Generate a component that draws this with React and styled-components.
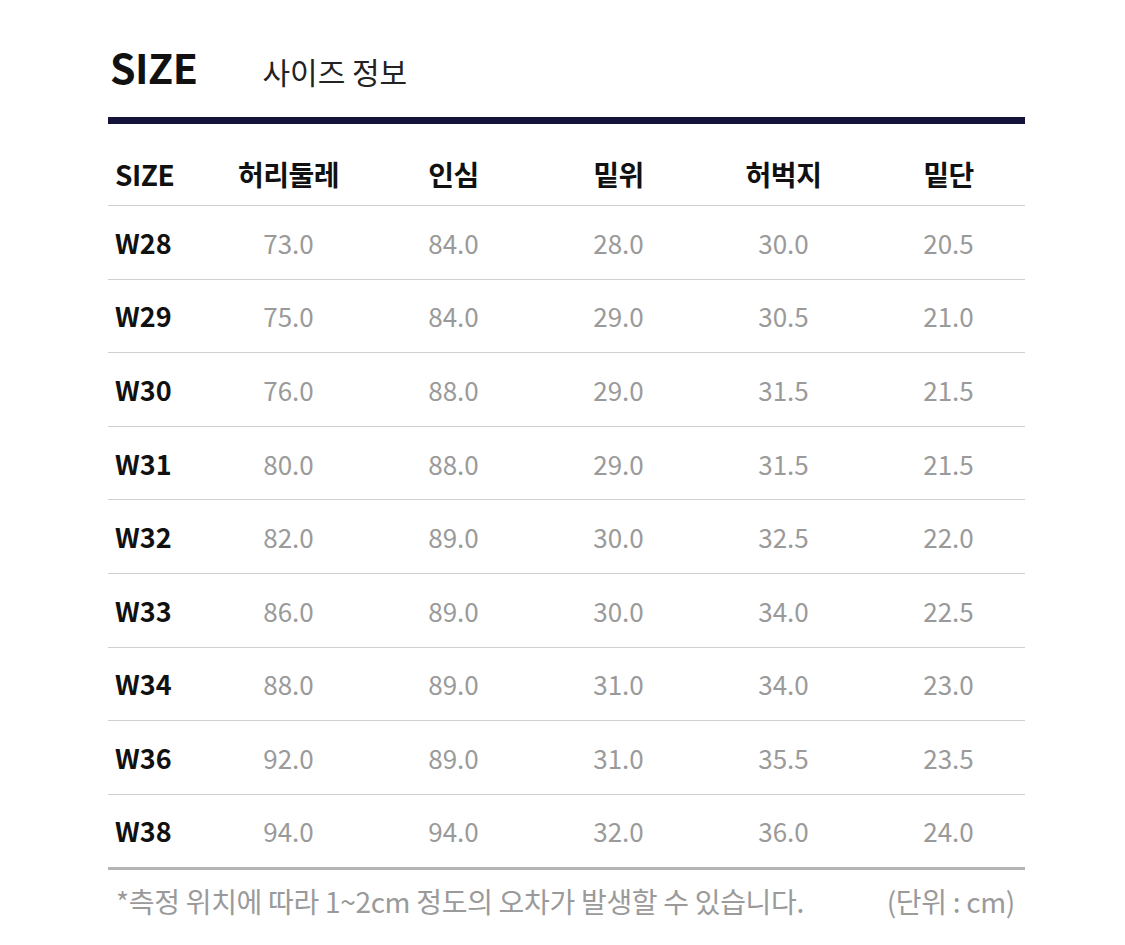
import React from "react";
import styled, { createGlobalStyle } from "styled-components";

const Global = createGlobalStyle`
  html, body { margin: 0; padding: 0; background: #fff; }
  body { font-family: "Noto Sans CJK KR", "Noto Sans", sans-serif; color: #111; }
`;

const Page = styled.div`
  width: 1125px;
  height: 945px;
  box-sizing: border-box;
  padding: 36px 0 0 108px;
`;

const Wrap = styled.div`
  width: 917px;
`;

const TitleBar = styled.div`
  display: flex;
  align-items: baseline;
  padding-left: 2px;
  height: 60px;
`;

const Title = styled.h1`
  margin: 0;
  font-size: 41px;
  font-weight: 700;
  letter-spacing: -0.5px;
  color: #111;
`;

const Sub = styled.span`
  margin-left: 65px;
  font-size: 30px;
  font-weight: 400;
  color: #222;
`;

const NavyRule = styled.div`
  height: 7px;
  background: #14143a;
  margin-top: 21px;
`;

const Row = styled.div`
  display: grid;
  grid-template-columns: 98px repeat(5, 165px);
  align-items: center;
  height: ${(p) => p.$h}px;
  padding-top: ${(p) => (p.$head ? "18px" : "0")};
  border-bottom: ${(p) => (p.$last ? "3px solid #b5b5b5" : "1px solid #cfcfcf")};
  box-sizing: border-box;
`;

const Cell = styled.div`
  font-size: ${(p) => (p.$head ? "28px" : p.$first ? "27px" : "26px")};
  text-align: ${(p) => (p.$first ? "left" : "center")};
  padding-left: ${(p) => (p.$first ? "7px" : "0")};
  font-weight: ${(p) => (p.$head || p.$first ? 700 : 400)};
  color: ${(p) => (p.$head || p.$first ? "#111" : "#9a9a9a")};
  letter-spacing: ${(p) => (p.$head ? "-0.5px" : "0")};
`;

const Foot = styled.div`
  display: flex;
  justify-content: space-between;
  margin-top: 11px;
  padding: 0 10px 0 8px;
  font-size: 28px;
  color: #9a9a9a;
  letter-spacing: -0.3px;
`;

const head = ["SIZE", "허리둘레", "인심", "밑위", "허벅지", "밑단"];
const rows = [
  ["W28", "73.0", "84.0", "28.0", "30.0", "20.5"],
  ["W29", "75.0", "84.0", "29.0", "30.5", "21.0"],
  ["W30", "76.0", "88.0", "29.0", "31.5", "21.5"],
  ["W31", "80.0", "88.0", "29.0", "31.5", "21.5"],
  ["W32", "82.0", "89.0", "30.0", "32.5", "22.0"],
  ["W33", "86.0", "89.0", "30.0", "34.0", "22.5"],
  ["W34", "88.0", "89.0", "31.0", "34.0", "23.0"],
  ["W36", "92.0", "89.0", "31.0", "35.5", "23.5"],
  ["W38", "94.0", "94.0", "32.0", "36.0", "24.0"],
];

export default function App() {
  return (
    <Page>
      <Global />
      <Wrap>
        <TitleBar>
          <Title>SIZE</Title>
          <Sub>사이즈 정보</Sub>
        </TitleBar>
        <NavyRule />
        <Row $h={82} $head>
          {head.map((h, i) => (
            <Cell key={i} $head $first={i === 0}>
              {h}
            </Cell>
          ))}
        </Row>
        {rows.map((r, ri) => (
          <Row key={ri} $h={ri === rows.length - 1 ? 75 : 73.6} $last={ri === rows.length - 1}>
            {r.map((c, ci) => (
              <Cell key={ci} $first={ci === 0}>
                {c}
              </Cell>
            ))}
          </Row>
        ))}
        <Foot>
          <span>*측정 위치에 따라 1~2cm 정도의 오차가 발생할 수 있습니다.</span>
          <span>(단위 : cm)</span>
        </Foot>
      </Wrap>
    </Page>
  );
}
